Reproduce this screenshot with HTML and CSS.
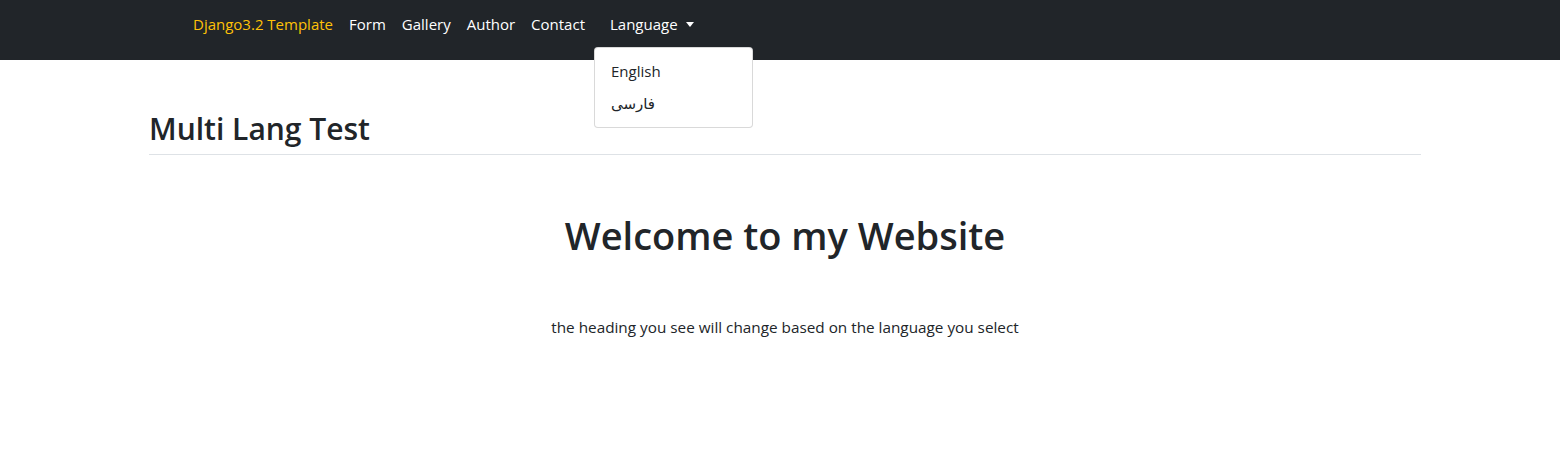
FILE: index.html
```html
<!DOCTYPE html>
<html lang="en">
<head>
<meta charset="utf-8">
<title>Multi Lang Test</title>
<link rel="stylesheet" href="styles.css">
</head>
<body>
<nav class="navbar">
  <div class="nav-inner">
    <a class="brand" href="#">Django3.2 Template</a>
    <ul class="nav-links">
      <li><a class="nav-link" href="#">Form</a></li>
      <li><a class="nav-link" href="#">Gallery</a></li>
      <li><a class="nav-link" href="#">Author</a></li>
      <li><a class="nav-link" href="#">Contact</a></li>
    </ul>
    <div class="dropdown">
      <a class="nav-link dropdown-toggle" href="#">Language<span class="caret"></span></a>
      <ul class="dropdown-menu">
        <li><a class="dropdown-item" href="#">English</a></li>
        <li><a class="dropdown-item" href="#">فارسی</a></li>
      </ul>
    </div>
  </div>
</nav>
<main class="container">
  <h2 class="page-title">Multi Lang Test</h2>
  <hr class="divider">
  <section class="hero">
    <h1 class="hero-title">Welcome to my Website</h1>
    <p class="hero-text">the heading you see will change based on the language you select</p>
  </section>
</main>
</body>
</html>
```
FILE: styles.css
```css
* { box-sizing: border-box; }
html, body { margin: 0; padding: 0; }
body {
  font-family: "Open Sans", "Noto Sans", "DejaVu Sans", sans-serif;
  font-size: 15px;
  line-height: 24px;
  color: #212529;
  background: #fff;
}
a { text-decoration: none; }
ul { list-style: none; margin: 0; padding: 0; }

.navbar {
  background: #212529;
  height: 60px;
}
.nav-inner {
  display: flex;
  align-items: flex-start;
  padding: 12px 0 0 193px;
}
.brand {
  color: #ffc107;
  font-size: 15px;
  margin-right: 8px;
}
.nav-links {
  display: flex;
}
.nav-link {
  display: block;
  color: #fff;
  padding: 0 8px;
}
.dropdown {
  position: relative;
  margin-left: 1px;
}
.dropdown-toggle {
  padding: 0 16px;
  display: flex;
  align-items: center;
}
.caret {
  display: inline-block;
  margin-left: 8px;
  width: 0;
  height: 0;
  border-top: 5px solid #fff;
  border-left: 4.5px solid transparent;
  border-right: 4.5px solid transparent;
}
.dropdown-menu {
  position: absolute;
  top: 35px;
  left: 0;
  width: 159px;
  background: #fff;
  border: 1px solid rgba(0,0,0,0.15);
  border-radius: 4px;
  padding: 7px 0 8px;
  z-index: 10;
}
.dropdown-item {
  display: block;
  padding: 4px 16px;
  color: #212529;
  font-size: 15px;
}

.container {
  margin: 0 139px 0 149px;
  padding-top: 50px;
}
.page-title {
  margin: 0;
  font-size: 30px;
  line-height: 38px;
  font-weight: 600;
}
.divider {
  margin: 6px 0 0;
  border: 0;
  border-top: 1px solid #dee2e6;
}
.hero {
  text-align: center;
  padding-top: 56px;
}
.hero-title {
  margin: 0;
  font-size: 38px;
  line-height: 48px;
  font-weight: 600;
}
.hero-text {
  margin: 56px 0 0;
  font-size: 15.3px;
}
```
